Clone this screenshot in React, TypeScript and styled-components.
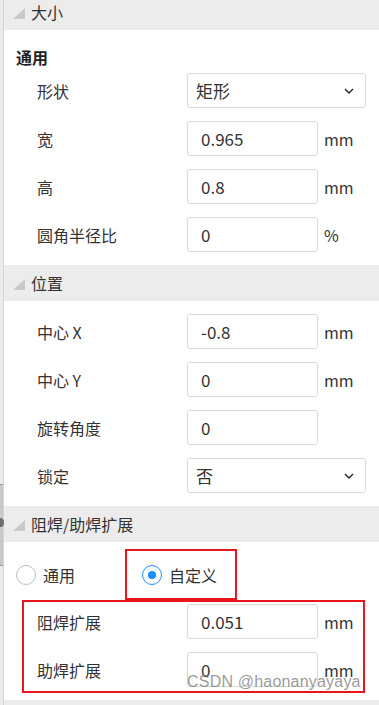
import React from 'react';
import styled, { createGlobalStyle } from 'styled-components';

const COLOR_TEXT = '#333333';
const COLOR_HEADER = '#ececec';
const COLOR_BORDER = '#d9d9d9';
const COLOR_BLUE = '#1890ff';
const COLOR_RED = '#e8141e';

const GlobalStyle = createGlobalStyle`
  html, body {
    margin: 0;
    padding: 0;
    background: #ffffff;
    overflow: hidden;
  }
  body {
    font-family: "Noto Sans CJK SC", "Noto Sans", "Liberation Sans", sans-serif;
    color: ${COLOR_TEXT};
  }
`;

const Page = styled.div`
  display: flex;
  width: 379px;
  height: 705px;
  overflow: hidden;
  position: relative;
`;

const Gutter = styled.div`
  width: 3px;
  flex-shrink: 0;
  background: #ebebeb;
  border-right: 1px solid #d6d6d6;
  position: relative;
`;

const Splitter = styled.div`
  position: absolute;
  left: 0;
  top: 484px;
  height: 80px;
  width: 3px;
  background: #c9c9c9;
  border-top: 1px solid #9a9a9a;
  border-bottom: 1px solid #9a9a9a;

  &::after {
    content: '';
    position: absolute;
    left: -3px;
    top: 33px;
    width: 7px;
    height: 9px;
    border-radius: 50%;
    background: #6e6e6e;
  }
`;

const Panel = styled.div`
  flex: 1;
  display: flex;
  flex-direction: column;
  margin-top: -6px;
`;

const SectionHeader = styled.div`
  display: flex;
  align-items: center;
  gap: 6px;
  height: 36px;
  padding-left: 8px;
  background: ${COLOR_HEADER};
  font-size: 16px;
  color: ${COLOR_TEXT};
`;

const SectionBody = styled.div`
  display: flex;
  flex-direction: column;
  gap: 13px;
  padding: 13px 0;
`;

const SubTitle = styled.div`
  height: 30px;
  margin-bottom: -13px;
  padding-left: 12px;
  font-size: 16px;
  font-weight: 700;
  line-height: 28px;
  color: #222;
`;

const Row = styled.div<{ $labelWidth?: number }>`
  display: grid;
  grid-template-columns: ${(p) => p.$labelWidth ?? 183}px 131px auto;
  align-items: center;
  height: 35px;
`;

const Label = styled.div<{ $indent?: number }>`
  padding-left: ${(p) => p.$indent ?? 33}px;
  font-size: 16px;
  color: ${COLOR_TEXT};
  white-space: nowrap;
`;

const Input = styled.div`
  box-sizing: border-box;
  height: 35px;
  display: flex;
  align-items: center;
  padding-left: 13px;
  border: 1px solid ${COLOR_BORDER};
  border-radius: 3px;
  font-size: 17px;
  color: ${COLOR_TEXT};
  background: #fff;
`;

const Select = styled(Input)`
  grid-column: 2 / span 2;
  width: 179px;
  padding: 0 11px 0 8px;
  justify-content: space-between;
`;

const Unit = styled.div`
  padding-left: 6px;
  font-size: 16px;
  color: ${COLOR_TEXT};
`;

const RadioRow = styled.div`
  display: flex;
  align-items: center;
  padding: 7px 0 0 12px;
  height: 51px;
`;

const RadioOption = styled.div<{ $highlight?: boolean }>`
  box-sizing: border-box;
  display: flex;
  align-items: center;
  gap: 7px;
  height: 51px;
  font-size: 16px;
  color: ${COLOR_TEXT};
  ${(p) =>
    p.$highlight
      ? `border: 2px solid ${COLOR_RED}; padding: 0 18px 0 15px;`
      : `width: 109px;`}
`;

const RadioCircle = styled.span<{ $checked?: boolean }>`
  box-sizing: border-box;
  width: 20px;
  height: 20px;
  border-radius: 50%;
  border: 1px solid ${(p) => (p.$checked ? COLOR_BLUE : '#bdbdbd')};
  display: flex;
  align-items: center;
  justify-content: center;
  background: #fff;

  &::after {
    content: '';
    display: ${(p) => (p.$checked ? 'block' : 'none')};
    width: 8px;
    height: 8px;
    border-radius: 50%;
    background: ${COLOR_BLUE};
  }
`;

const HighlightGroup = styled.div`
  display: flex;
  flex-direction: column;
  gap: 13px;
  margin: 0 14px 0 18px;
  padding: 2px 0 4px;
  border: 2px solid ${COLOR_RED};
`;

const Footer = styled.div`
  flex: 1;
  margin-top: 7px;
  background: ${COLOR_HEADER};
`;

const Watermark = styled.div`
  position: absolute;
  left: 187px;
  top: 673px;
  font-family: "Liberation Sans", Arial, sans-serif;
  font-size: 16px;
  color: rgba(120, 120, 120, 0.75);
  letter-spacing: 0.2px;
  pointer-events: none;
`;

const Corner = () => (
  <svg width="13" height="13" viewBox="0 0 13 13">
    <polygon points="13,2 13,13 1,13" fill="#c9c9c9" />
  </svg>
);

const Chevron = () => (
  <svg width="10" height="6" viewBox="0 0 10 6">
    <path d="M1 1 L5 5 L9 1" fill="none" stroke="#222" strokeWidth="1.4" />
  </svg>
);

const Header = ({ title }: { title: string }) => (
  <SectionHeader>
    <Corner />
    {title}
  </SectionHeader>
);

type FieldProps = { label: string; value: string; unit?: string; labelWidth?: number; indent?: number };

const Field = ({ label, value, unit, labelWidth, indent }: FieldProps) => (
  <Row $labelWidth={labelWidth}>
    <Label $indent={indent}>{label}</Label>
    <Input>{value}</Input>
    {unit && <Unit>{unit}</Unit>}
  </Row>
);

const SelectField = ({ label, value }: { label: string; value: string }) => (
  <Row>
    <Label>{label}</Label>
    <Select>
      <span>{value}</span>
      <Chevron />
    </Select>
  </Row>
);

export default function App() {
  return (
    <>
      <GlobalStyle />
      <Page>
        <Gutter>
          <Splitter />
        </Gutter>
        <Panel>
          <Header title="大小" />
          <SectionBody>
            <SubTitle>通用</SubTitle>
            <SelectField label="形状" value="矩形" />
            <Field label="宽" value="0.965" unit="mm" />
            <Field label="高" value="0.8" unit="mm" />
            <Field label="圆角半径比" value="0" unit="%" />
          </SectionBody>

          <Header title="位置" />
          <SectionBody>
            <Field label="中心 X" value="-0.8" unit="mm" />
            <Field label="中心 Y" value="0" unit="mm" />
            <Field label="旋转角度" value="0" />
            <SelectField label="锁定" value="否" />
          </SectionBody>

          <Header title="阻焊/助焊扩展" />
          <RadioRow>
            <RadioOption>
              <RadioCircle />
              通用
            </RadioOption>
            <RadioOption $highlight>
              <RadioCircle $checked />
              自定义
            </RadioOption>
          </RadioRow>
          <HighlightGroup>
            <Field label="阻焊扩展" value="0.051" unit="mm" labelWidth={163} indent={13} />
            <Field label="助焊扩展" value="0" unit="mm" labelWidth={163} indent={13} />
          </HighlightGroup>
          <Footer />
        </Panel>
        <Watermark>CSDN @haonanyayaya</Watermark>
      </Page>
    </>
  );
}
